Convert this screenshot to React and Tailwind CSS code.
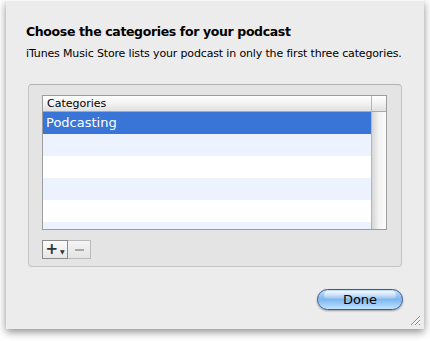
import React from 'react';

const rows = ['Podcasting', '', '', '', '', ''];

function ResizeGrip() {
    return (
        <svg width="12" height="12" viewBox="0 0 12 12" className="absolute right-[3px] bottom-[3px]">
            <path d="M11 2 L2 11 M11 6 L6 11 M11 10 L10 11" stroke="#8a8a8a" strokeWidth="1" fill="none" />
            <path d="M11 3 L3 11 M11 7 L7 11" stroke="#ffffff" strokeWidth="1" fill="none" />
        </svg>
    );
}

function CategoryTable() {
    return (
        <div className="flex w-[345px] h-[135px] border border-[#9d9d9d] bg-white overflow-hidden">
            <div className="flex flex-col flex-1">
                <div className="h-[16px] border-b border-[#a9a9a9] bg-gradient-to-b from-[#ffffff] via-[#f2f2f2] to-[#e0e0e0] px-[4px] text-[11px] leading-[15px] text-black">
                    Categories
                </div>
                {rows.map((name, i) => (
                    <div
                        key={i}
                        className={`h-[22px] shrink-0 px-[3px] text-[13px] leading-[22px] ${i === 0 ? 'bg-[#3875d7] text-white' : i % 2 === 1 ? 'bg-[#edf3fe]' : 'bg-white'}`}
                    >
                        {name}
                    </div>
                ))}
            </div>
            <div className="flex flex-col w-[15px] border-l border-[#b5b5b5]">
                <div className="h-[16px] border-b border-[#a9a9a9] bg-gradient-to-b from-[#ffffff] via-[#f2f2f2] to-[#e0e0e0]" />
                <div className="flex-1 bg-gradient-to-r from-[#d6d6d6] via-[#f4f4f4] to-[#fbfbfb]" />
            </div>
        </div>
    );
}

function App() {
    return (
        <div className="w-[430px] h-[341px] bg-white overflow-hidden" style={{ fontFamily: '"DejaVu Sans", "Liberation Sans", sans-serif' }}>
            <div className="relative ml-[6px] w-[418px] h-[329px] bg-[#ececec] shadow-[0_3px_8px_rgba(0,0,0,0.45)] border-t border-[#f6f6f6]">
                <div className="pl-[20px] pt-[23px] text-[12.5px] leading-[16px] font-bold text-black tracking-[-0.36px]">
                    Choose the categories for your podcast
                </div>
                <div className="pl-[20px] pt-[7px] text-[11px] leading-[14px] text-black tracking-[-0.15px]">
                    iTunes Music Store lists your podcast in only the first three categories.
                </div>
                <div className="ml-[22px] mt-[23px] w-[374px] h-[183px] rounded-[4px] border border-[#c4c4c4] border-t-[#b3b3b3] bg-[#e4e4e4] pt-[10px] pl-[13px]">
                    <CategoryTable />
                    <div className="flex mt-[10px]">
                        <div className="flex items-center justify-center gap-[2px] w-[26px] h-[19px] border border-[#8c8c8c] bg-gradient-to-b from-[#fbfbfb] to-[#e6e6e6]">
                            <span className="text-[15px] leading-none font-bold text-[#333]">+</span>
                            <span className="text-[6px] leading-none text-[#333] mt-[4px]">▼</span>
                        </div>
                        <div className="flex items-center justify-center w-[23px] h-[19px] border border-l-0 border-[#b9b9b9] bg-gradient-to-b from-[#f4f4f4] to-[#e4e4e4]">
                            <span className="block w-[9px] h-[2px] bg-[#a8a8a8]" />
                        </div>
                    </div>
                </div>
                <div className="flex justify-end pr-[21px] mt-[22px]">
                    <div className="relative w-[86px] h-[21px] rounded-full border border-[#3d5b8c] bg-gradient-to-b from-[#c3defa] via-[#7eb6ef] to-[#bfe3ff] flex items-center justify-center shadow-[0_1px_2px_rgba(0,0,0,0.35)] overflow-hidden">
                        <div className="absolute top-[1px] left-[6px] right-[6px] h-[8px] rounded-full bg-gradient-to-b from-[#ffffff]/80 to-[#ffffff]/10" />
                        <span className="relative text-[13px] leading-none text-black">Done</span>
                    </div>
                </div>
                <ResizeGrip />
            </div>
        </div>
    );
}

export default App;
